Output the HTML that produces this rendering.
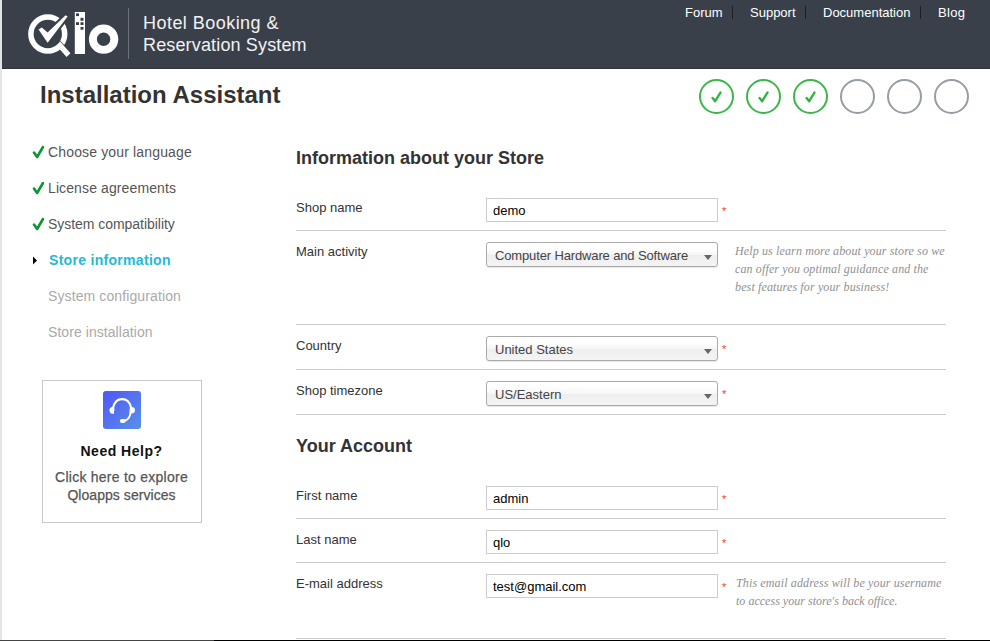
<!DOCTYPE html>
<html><head><meta charset="utf-8">
<style>
*{margin:0;padding:0;box-sizing:border-box}
html,body{width:990px;height:641px;overflow:hidden;background:#fff}
body{position:relative;font-family:"Liberation Sans",sans-serif;color:#333}
.a{position:absolute;white-space:nowrap;line-height:1}
#strip{position:absolute;left:0;top:0;width:2px;height:641px;background:#e3e5e4}
#hdr{position:absolute;left:2px;top:0;width:988px;height:69px;background:#3a404a;border-bottom:1px solid #2f343d}
.ht{color:#f2f2f2;font-size:18px}
.nav{color:#fff;font-size:13px}
.nsep{position:absolute;top:6px;width:1px;height:13px;background:#1c1f25}
.circ{position:absolute;top:79px;width:35px;height:35px;border-radius:50%;border:2px solid #979da4}
.circ.g{border-color:#3db54a}
.step{font-size:14px;color:#555;letter-spacing:0.15px}
.step.p{color:#aaa}
.chk{position:absolute;left:33px;}
.lbl{font-size:13px;color:#333}
.line{position:absolute;left:296px;width:650px;height:1px;background:#ccc}
.inp{position:absolute;left:486px;width:232px;height:24px;border:1px solid #ccc;background:#fff}
.itxt{font-size:13px;color:#000}
.sel{position:absolute;left:486px;width:232px;height:25px;border:1px solid #aaa;border-radius:3px;
 background:linear-gradient(#fff 20%,#f6f6f6 50%,#eee 52%,#f4f4f4 100%);box-shadow:0 1px 1px rgba(0,0,0,.1)}
.stxt{font-size:13px;color:#444}
.arr{position:absolute;left:704px;width:0;height:0;border-left:4px solid transparent;border-right:4px solid transparent;border-top:5px solid #666}
.req{position:absolute;left:722px;font-size:11px;color:#f33}
.help{font-family:"Liberation Serif",serif;font-style:italic;font-size:12px;color:#8f8f8f;line-height:18px;letter-spacing:0.13px}
h2.a{font-size:18px;font-weight:bold;color:#333}
</style></head><body>
<div id="strip"></div>
<div id="hdr"></div>
<svg style="position:absolute;left:0;top:0" width="140" height="69" viewBox="0 0 140 69">
  <circle cx="47.8" cy="34" r="16.9" fill="none" stroke="#fff" stroke-width="5.5"/>
  <path d="M57.3 38.6 L67 49.6" stroke="#3a404a" stroke-width="1.7" fill="none"/>
  <path d="M59.9 41.2 L70.4 53.3 L66.6 56.9 L57.9 47.25 Z" fill="#fff"/>
  <path d="M38.6 29.5 L47.6 42.8 L67.6 16.4 L65.6 15.2 L47.6 32.6 L41.8 27.5 Z" fill="#3a404a" stroke="#3a404a" stroke-width="4.2" stroke-linejoin="round"/>
  <path d="M38.6 29.5 L47.6 42.8 L67.6 16.4 L65.6 15.2 L47.6 32.6 L41.8 27.5 Z" fill="#fff"/>
  <rect x="74.8" y="12" width="10.2" height="42" fill="#fff"/>
  <g fill="#3a404a">
    <rect x="76" y="13.3" width="3" height="2.8"/>
    <rect x="80.5" y="17.8" width="3" height="3"/>
    <rect x="76" y="22.2" width="3" height="2.8"/>
    <rect x="80.5" y="22.2" width="3" height="2.8"/>
    <rect x="80.5" y="26.9" width="3" height="2.8"/>
  </g>
  <circle cx="103.6" cy="39.15" r="10.7" fill="none" stroke="#fff" stroke-width="7.95"/>
  <rect x="128" y="8" width="1" height="51" fill="#6c717a"/>
</svg>
<div class="a ht" style="left:143px;top:14px;letter-spacing:0.46px">Hotel Booking &amp;</div>
<div class="a ht" style="left:143px;top:36px;letter-spacing:0.15px">Reservation System</div>

<div class="a nav" style="left:685px;top:6px">Forum</div>
<div class="nsep" style="left:732px"></div>
<div class="a nav" style="left:750px;top:6px">Support</div>
<div class="nsep" style="left:805px"></div>
<div class="a nav" style="left:823px;top:6px">Documentation</div>
<div class="nsep" style="left:920px"></div>
<div class="a nav" style="left:938px;top:6px;letter-spacing:0.3px">Blog</div>

<div class="a" style="left:40px;top:83px;font-size:24px;font-weight:bold;color:#333">Installation Assistant</div>

<div class="circ g" style="left:699px"></div>
<div class="circ g" style="left:746px"></div>
<div class="circ g" style="left:793px"></div>
<div class="circ" style="left:840px"></div>
<div class="circ" style="left:887px"></div>
<div class="circ" style="left:934px"></div>
<svg style="position:absolute;left:690px;top:80px" width="150" height="35">
  <g fill="none" stroke="#2fb33f" stroke-width="2.4" stroke-linecap="round" stroke-linejoin="round">
    <path d="M22.6 17.9 L25.2 21.2 L30.5 12.5"/>
    <path d="M69.6 17.9 L72.2 21.2 L77.5 12.5"/>
    <path d="M116.6 17.9 L119.2 21.2 L124.5 12.5"/>
  </g>
</svg>

<svg style="position:absolute;left:30px;top:140px" width="20" height="200">
  <g fill="none" stroke="#0a972f" stroke-width="2.6" stroke-linecap="round" stroke-linejoin="round">
    <path d="M4 12.6 L7.1 17 L13 7"/>
    <path d="M4 48.6 L7.1 53 L13 43"/>
    <path d="M4 84.6 L7.1 89 L13 79"/>
  </g>
</svg>
<div class="a step" style="left:48px;top:145px">Choose your language</div>
<div class="a step" style="left:48px;top:181px;letter-spacing:0.11px">License agreements</div>
<div class="a step" style="left:48px;top:217px;letter-spacing:-0.04px">System compatibility</div>
<div class="a step" style="left:49px;top:253px;color:#25b9d7;font-weight:bold;letter-spacing:0.3px">Store information</div>
<div class="a step p" style="left:48px;top:289px;letter-spacing:0.11px">System configuration</div>
<div class="a step p" style="left:48px;top:325px;letter-spacing:0.06px">Store installation</div>
<svg style="position:absolute;left:32px;top:256px" width="8" height="10"><path d="M1 0.5 L5 4.5 L1 8.5 Z" fill="#000"/></svg>

<div style="position:absolute;left:42px;top:380px;width:160px;height:143px;border:1px solid #c8c8c8"></div>
<div style="position:absolute;left:103px;top:391px;width:38px;height:38px;border-radius:3px;background:linear-gradient(135deg,#4f57f5,#5a90e8)"></div>
<svg style="position:absolute;left:103px;top:391px" width="38" height="38" viewBox="0 0 38 38">
  <path d="M10.66 19.9 A8.8 9.2 0 1 1 27.54 19.9 C27.6 25.5 25 29.3 21 29.8" fill="none" stroke="#fff" stroke-width="2.1"/>
  <path d="M11 15.7 L9.5 15.7 A3.6 3.6 0 0 0 9.5 22.8 L11 22.8 Z" fill="#fff"/>
  <path d="M27.6 16 L28.6 16 A3.3 3.3 0 0 1 28.6 22.6 L27.6 22.6 Z" fill="#fff"/>
  <rect x="16.9" y="27.9" width="5.6" height="4.1" rx="2" fill="#fff"/>
</svg>
<div class="a" style="left:0;width:243px;text-align:center;top:444px;font-size:14px;font-weight:bold;color:#111;letter-spacing:0.5px">Need Help?</div>
<div class="a" style="left:0;width:243px;text-align:center;top:470px;font-size:14px;color:#555;letter-spacing:0.25px;-webkit-text-stroke:0.25px #555">Click here to explore</div>
<div class="a" style="left:0;width:243px;text-align:center;top:488px;font-size:14px;color:#555;letter-spacing:0.05px;-webkit-text-stroke:0.25px #555">Qloapps services</div>

<h2 class="a" style="left:296px;top:149px">Information about your Store</h2>

<div class="a lbl" style="left:296px;top:201px">Shop name</div>
<div class="inp" style="top:198px"></div>
<div class="a itxt" style="left:493px;top:204px">demo</div>
<div class="a req" style="top:206px">*</div>
<div class="line" style="top:230px"></div>

<div class="a lbl" style="left:296px;top:245px">Main activity</div>
<div class="sel" style="top:242px"></div>
<div class="a stxt" style="left:495px;top:249px;letter-spacing:-0.14px">Computer Hardware and Software</div>
<div class="arr" style="top:255px"></div>
<div class="a help" style="left:735px;top:242px">Help us learn more about your store so we<br>can offer you optimal guidance and the<br>best features for your business!</div>
<div class="line" style="top:324px"></div>

<div class="a lbl" style="left:296px;top:339px">Country</div>
<div class="sel" style="top:336px"></div>
<div class="a stxt" style="left:495px;top:343px">United States</div>
<div class="arr" style="top:349px"></div>
<div class="a req" style="top:344px">*</div>
<div class="line" style="top:369px"></div>

<div class="a lbl" style="left:296px;top:384px">Shop timezone</div>
<div class="sel" style="top:381px"></div>
<div class="a stxt" style="left:495px;top:388px">US/Eastern</div>
<div class="arr" style="top:394px"></div>
<div class="a req" style="top:389px">*</div>
<div class="line" style="top:414px"></div>

<h2 class="a" style="left:296px;top:437px">Your Account</h2>

<div class="a lbl" style="left:296px;top:489px">First name</div>
<div class="inp" style="top:486px"></div>
<div class="a itxt" style="left:493px;top:492px">admin</div>
<div class="a req" style="top:494px">*</div>
<div class="line" style="top:518px"></div>

<div class="a lbl" style="left:296px;top:533px">Last name</div>
<div class="inp" style="top:530px"></div>
<div class="a itxt" style="left:493px;top:536px">qlo</div>
<div class="a req" style="top:538px">*</div>
<div class="line" style="top:562px"></div>

<div class="a lbl" style="left:296px;top:577px">E-mail address</div>
<div class="inp" style="top:574px"></div>
<div class="a itxt" style="left:493px;top:580px">test@gmail.com</div>
<div class="a req" style="top:582px">*</div>
<div class="a help" style="left:736px;top:574px">This email address will be your username<br><span style="letter-spacing:0.02px">to access your store's back office.</span></div>
<div class="line" style="top:638px"></div>

<div style="position:absolute;left:0;top:640px;width:214px;height:1px;background:#444"></div>
<div style="position:absolute;left:214px;top:640px;width:776px;height:1px;background:#000"></div>
</body></html>
